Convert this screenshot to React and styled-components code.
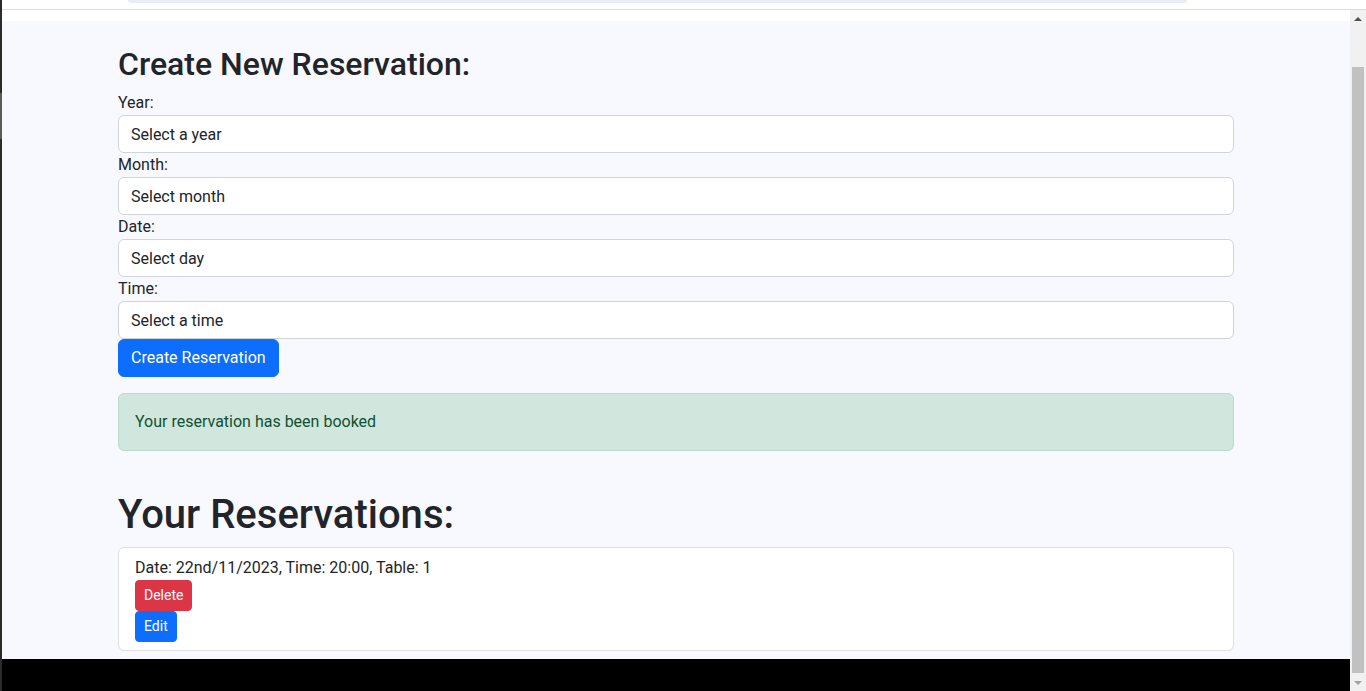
import React from 'react'
import styled, { createGlobalStyle } from 'styled-components'

const GlobalStyle = createGlobalStyle`
  html, body {
    margin: 0;
    padding: 0;
    height: 100%;
    overflow: hidden;
  }
  body {
    font-family: Roboto, "Liberation Sans", Arial, sans-serif;
    color: #212529;
  }
  * { box-sizing: border-box; }
`

const Screen = styled.div`
  display: flex;
  width: 1366px;
  height: 691px;
  background: #fff;
`

const LeftEdge = styled.div`
  width: 2px;
  background: linear-gradient(
    to bottom,
    #2b2b2b 0,
    #2b2b2b 93px,
    #5b5b5b 93px,
    #5b5b5b 139px,
    #2b2b2b 139px
  );
`

const Window = styled.div`
  flex: 1;
  display: flex;
  flex-direction: column;
  min-width: 0;
`

const TopStrip = styled.div`
  height: 9px;
  background: #fff;
  padding: 0 179px 0 126px;
`

const SearchPillEnd = styled.div`
  height: 3px;
  background: #eaedf8;
  border-radius: 0 0 10px 10px;
`

const Divider = styled.div`
  height: 1px;
  background: #dcdcdc;
`

const Frame = styled.div`
  flex: 1;
  display: flex;
  min-height: 0;
`

const Page = styled.div`
  flex: 1;
  display: flex;
  flex-direction: column;
  min-width: 0;
`

const WhiteBand = styled.div`
  height: 11px;
  background: #fff;
`

const Main = styled.main`
  flex: 1;
  background: #f8f8ff;
  padding-top: 24px;
`

const Container = styled.div`
  max-width: 1140px;
  margin: 0 auto;
  padding: 0 12px;
`

const Title = styled.h2`
  margin: ${p => (p.big ? '40px 0 8px' : '0 0 8px')};
  font-size: ${p => (p.big ? '40px' : '32px')};
  font-weight: 500;
  line-height: 1.2;
`

const Label = styled.label`
  display: block;
  font-size: 16px;
  line-height: 24px;
`

const Select = styled.div`
  height: 38px;
  padding: 7px 12px 5px;
  font-size: 16px;
  line-height: 24px;
  background: #fff;
  border: 1px solid #ced4da;
  border-radius: 6px;
`

const Button = styled.button`
  display: block;
  font-family: inherit;
  color: #fff;
  border: 1px solid ${p => p.bg};
  background: ${p => p.bg};
  font-size: ${p => (p.small ? '14px' : '16px')};
  line-height: ${p => (p.small ? '21px' : '24px')};
  padding: ${p => (p.small ? '4px 8px' : '6px 12px')};
  border-radius: ${p => (p.small ? '4px' : '6px')};
  cursor: pointer;
`

const Alert = styled.div`
  margin: 16px 0;
  padding: 16px;
  font-size: 16px;
  line-height: 24px;
  color: #0f5132;
  background: #d1e7dd;
  border: 1px solid #badbcc;
  border-radius: 6px;
`

const List = styled.ul`
  margin: 0;
  padding: 0;
  list-style: none;
  background: #fff;
  border: 1px solid #dfdfdf;
  border-radius: 6px;
`

const Item = styled.li`
  padding: 8px 16px;
  font-size: 16px;
  line-height: 24px;
`

const BottomBar = styled.div`
  height: 32px;
  background: #000;
`

const Scrollbar = styled.div`
  width: 16px;
  display: flex;
  flex-direction: column;
  background: #f1f1f1;
`

const Arrow = styled.div`
  height: 17px;
  display: flex;
  align-items: center;
  justify-content: center;
  &::after {
    content: '';
    border-left: 4px solid transparent;
    border-right: 4px solid transparent;
    ${p => (p.down
      ? 'border-top: 4px solid #a3a3a3;'
      : 'border-bottom: 4px solid #505050;')}
  }
`

const Track = styled.div`
  flex: 1;
  display: flex;
  flex-direction: column;
  padding: 40px 2px 1px;
`

const Thumb = styled.div`
  flex: 1;
  background: #c1c1c1;
`

const fields = [
  ['Year:', 'Select a year'],
  ['Month:', 'Select month'],
  ['Date:', 'Select day'],
  ['Time:', 'Select a time']
]

const App = () => (
  <Screen>
    <GlobalStyle />
    <LeftEdge />
    <Window>
      <TopStrip><SearchPillEnd /></TopStrip>
      <Divider />
      <Frame>
        <Page>
          <WhiteBand />
          <Main>
            <Container>
              <Title>Create New Reservation:</Title>
              {fields.map(([label, value]) => (
                <div key={label}>
                  <Label>{label}</Label>
                  <Select>{value}</Select>
                </div>
              ))}
              <Button bg='#0d6efd'>Create Reservation</Button>
              <Alert>Your reservation has been booked</Alert>
              <Title as='h1' big>Your Reservations:</Title>
              <List>
                <Item>
                  Date: 22nd/11/2023, Time: 20:00, Table: 1
                  <Button small bg='#dc3545'>Delete</Button>
                  <Button small bg='#0d6efd'>Edit</Button>
                </Item>
              </List>
            </Container>
          </Main>
          <BottomBar />
        </Page>
        <Scrollbar>
          <Arrow />
          <Track><Thumb /></Track>
          <Arrow down />
        </Scrollbar>
      </Frame>
    </Window>
  </Screen>
)

export default App
